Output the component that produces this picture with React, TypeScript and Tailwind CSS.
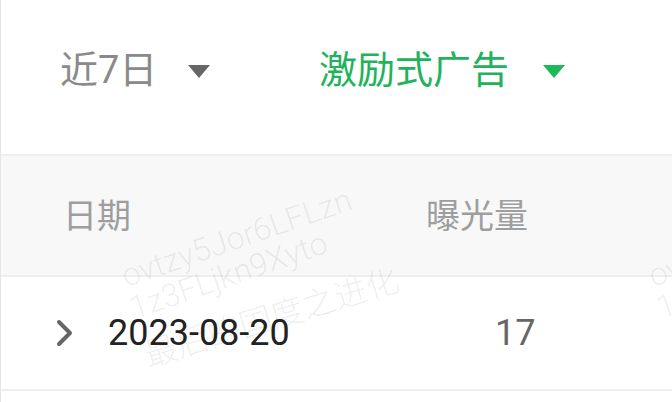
import React from "react";

const font = { fontFamily: "Roboto, 'Noto Sans CJK SC', sans-serif" };

function Watermark({ dx }: { dx: number }) {
  return (
    <>
      <div
        className="absolute whitespace-nowrap text-[32px] font-light leading-none text-[rgba(0,0,0,0.08)] origin-bottom-left -rotate-[19deg]"
        style={{ left: 127 + dx, top: 260 }}
      >
        ovtzy5Jor6LFLzn
      </div>
      <div
        className="absolute whitespace-nowrap text-[32px] font-light leading-none text-[rgba(0,0,0,0.08)] origin-bottom-left -rotate-[19deg]"
        style={{ left: 135 + dx, top: 292 }}
      >
        1z3FLjkn9Xyto
      </div>
      <div
        className="absolute whitespace-nowrap text-[33px] font-light leading-none text-[rgba(0,0,0,0.08)] origin-bottom-left -rotate-[17deg]"
        style={{ left: 149 + dx, top: 339 }}
      >
        最后的国度之进化
      </div>
    </>
  );
}

export default function App() {
  return (
    <div
      className="relative w-[672px] h-[402px] overflow-hidden bg-white border-l border-[#e6e6e6]"
      style={font}
    >
      {/* top filter bar */}
      <div className="h-[156px] flex items-start pt-[51px] border-b-2 border-[#efefef]">
        <div className="w-[318px] pl-[59px] flex items-center">
          <span className="text-[38px] leading-none text-[#8a8a8a]">近7日</span>
          <svg width="22" height="13" viewBox="0 0 22 13" className="ml-[31px] mt-[2px]">
            <polygon points="0,0 22,0 11,13" fill="#666666" />
          </svg>
        </div>
        <div className="flex items-center">
          <span className="text-[38px] leading-none text-[#1fb35b]">激励式广告</span>
          <svg width="22" height="13" viewBox="0 0 22 13" className="ml-[34px] mt-[2px]">
            <polygon points="0,0 22,0 11,13" fill="#1cb85a" />
          </svg>
        </div>
      </div>

      {/* table header */}
      <div className="h-[121px] bg-[#f8f8f8] flex items-center border-b-2 border-[#efefef]">
        <span className="w-[425px] pl-[62px] text-[34px] leading-none text-[#9e9e9e]">日期</span>
        <span className="text-[34px] leading-none text-[#9e9e9e]">曝光量</span>
      </div>

      {/* data row */}
      <div className="h-[114px] flex items-center border-b-2 border-[#efefef]">
        <div className="w-[494px] pl-[54px] flex items-center">
          <svg width="20" height="28" viewBox="0 0 20 28">
            <polyline
              points="4,3 15,14 4,25"
              fill="none"
              stroke="#666666"
              strokeWidth="4"
              strokeLinecap="round"
              strokeLinejoin="round"
            />
          </svg>
          <span className="ml-[33px] text-[36px] leading-none text-[#222222]">2023-08-20</span>
        </div>
        <span className="text-[36px] leading-none text-[#666666]">17</span>
      </div>

      {/* watermark overlay */}
      <div className="pointer-events-none absolute inset-0">
        <Watermark dx={0} />
        <Watermark dx={527} />
      </div>
    </div>
  );
}
